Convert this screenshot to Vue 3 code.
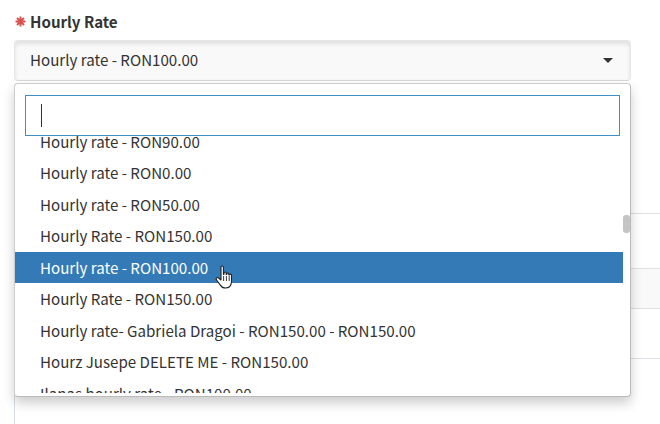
<template>
  <div class="page">
    <label class="field-label">
      <svg class="req" width="11" height="11" viewBox="0 0 11 11">
        <path d="M5.5 .5v10M.5 5.5h10M2 2l7 7M9 2l-7 7" stroke="#d9534f" stroke-width="2" fill="none" />
      </svg>
      Hourly Rate
    </label>
    <div class="select-box">
      <span>Hourly rate - RON100.00</span>
      <span class="caret"></span>
    </div>

    <!-- table behind the open dropdown -->
    <div class="behind">
      <div class="row" style="height: 54px"></div>
      <div class="row striped" style="height: 39px"></div>
      <div class="row" style="height: 49px"></div>
      <div class="row"></div>
    </div>

    <div class="dropdown">
      <input class="search" type="text" />
      <span class="text-cursor"></span>
      <div class="options">
        <ul>
          <li v-for="opt in options" :key="opt.id" :class="{ active: opt.active }">{{ opt.label }}</li>
        </ul>
        <div class="scroll-thumb"></div>
      </div>
    </div>

    <svg class="hand" width="20" height="26" viewBox="0 0 20 26">
      <path
        d="M6 2.2c0-1.6 2.4-1.6 2.4 0v7.2l.6-.2V8c0-1.4 2.2-1.4 2.2 0v1.5l.6 0V9c0-1.3 2.1-1.3 2.1 0v1l.6 0c0-1.2 2-1.1 2 .2v6.6c0 3-1 4-2 5-1 .8-2.4 1.2-4 1.2-2.6 0-4-1-5-2.6L1.6 15c-1.2-1.6.6-3.2 2-2l2.4 2z"
        fill="#fff" stroke="#222" stroke-width="1.1" stroke-linejoin="round"
      />
      <path d="M8.6 11v5M11.4 11v5M14.2 11v5" stroke="#222" stroke-width=".9" fill="none" />
    </svg>
  </div>
</template>

<script setup>
// options list of the open select
const labels = [
  'Hourly rate - RON90.00',
  'Hourly rate - RON0.00',
  'Hourly rate - RON50.00',
  'Hourly Rate - RON150.00',
  'Hourly rate - RON100.00',
  'Hourly Rate - RON150.00',
  'Hourly rate- Gabriela Dragoi - RON150.00 - RON150.00',
  'Hourz Jusepe DELETE ME - RON150.00',
  'Ilanas hourly rate - RON100.00',
]
const options = labels.map((label, id) => ({ id, label, active: id === 4 }))
</script>

<style scoped>
.page {
  position: relative;
  width: 660px;
  height: 424px;
  overflow: hidden;
  background: #fff;
  padding: 14px 29px 0 14px;
  box-sizing: border-box;
  font-family: "Noto Sans CJK SC", sans-serif;
  color: #333;
  font-size: 15.12px;
}
.field-label {
  display: flex;
  align-items: center;
  gap: 4px;
  height: 26px;
  padding: 0 0 12px 1px;
  box-sizing: border-box;
  line-height: 16px;
  font-weight: 700;
}
.req {
  flex: none;
}
.select-box {
  height: 41px;
  box-sizing: border-box;
  padding: 0 17px 4px 15px;
  display: flex;
  align-items: center;
  justify-content: space-between;
  line-height: 20px;
  background: #f9f9f9;
  border: 1px solid #e6e6e6;
  border-bottom-color: #d8d8d8;
  border-radius: 4px;
  box-shadow: inset 0 3px 4px rgba(0, 0, 0, 0.1);
}
.caret {
  width: 0;
  height: 0;
  margin-top: 3px;
  border-left: 5px solid transparent;
  border-right: 5px solid transparent;
  border-top: 5px solid #333;
}
.behind {
  margin: 132px -29px 0 0;
  height: 211px;
  border-left: 1px solid #d8dde3;
}
.row {
  border-top: 1px solid #dde0e4;
}
.row.striped {
  background: #f9f9f9;
}
.dropdown {
  position: absolute;
  left: 14px;
  top: 83px;
  width: 617px;
  height: 314px;
  box-sizing: border-box;
  background: #fff;
  border: 1px solid #ccc;
  border-bottom-color: #bbb;
  border-right-color: #bbb;
  border-radius: 4px;
  box-shadow: 0 6px 12px rgba(0, 0, 0, 0.2);
  padding: 11px 0 3px 0;
  display: flex;
  flex-direction: column;
}
.search {
  height: 41px;
  width: 595px;
  margin: 0 10px;
  padding: 0;
  flex: none;
  box-sizing: border-box;
  border: 1px solid #3f8fc4;
  border-radius: 0;
  outline: none;
  background: #fff;
}
.text-cursor {
  position: absolute;
  left: 26px;
  top: 20px;
  width: 1px;
  height: 23px;
  background: #333;
}
.options {
  position: relative;
  flex: 1;
  overflow: hidden;
}
ul {
  list-style: none;
  margin: -10.2px 0 0;
  padding: 0;
}
li {
  height: 31.5px;
  line-height: 31px;
  padding-left: 25px;
  margin-right: 7px;
  white-space: nowrap;
}
li.active {
  background: #337ab7;
  color: #fff;
}
.scroll-thumb {
  position: absolute;
  right: 0;
  top: 79px;
  width: 7px;
  height: 18px;
  border-radius: 3px;
  background: #c4c4c4;
}
.hand {
  position: absolute;
  left: 215px;
  top: 265px;
}
</style>
